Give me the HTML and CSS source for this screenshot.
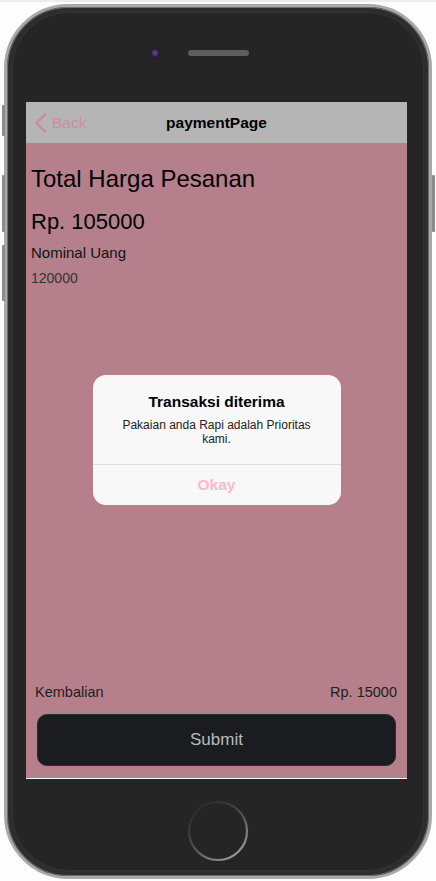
FILE: index.html
```html
<!DOCTYPE html>
<html lang="id">
<head>
<meta charset="utf-8">
<title>paymentPage</title>
<link rel="stylesheet" href="styles.css">
</head>
<body>
<div class="strip"></div>
<div class="phone">
  <span class="side side-mute"></span>
  <span class="side side-vol-up"></span>
  <span class="side side-vol-down"></span>
  <span class="side side-power"></span>
  <div class="bezel">
    <div class="top">
      <span class="camera"></span>
      <span class="speaker"></span>
    </div>
    <div class="screen">
      <header class="nav">
        <a class="back">
          <svg class="chevron" width="12" height="20" viewBox="0 0 12 20"><polyline points="10,1.5 1.5,10 10,18.5" fill="none" stroke="#d08c9d" stroke-width="2.6" stroke-linecap="round" stroke-linejoin="round"/></svg>
          <span>Back</span>
        </a>
        <h2 class="title">paymentPage</h2>
        <span></span>
      </header>
      <main class="content">
        <h1 class="total-label">Total Harga Pesanan</h1>
        <p class="total-amount">Rp. 105000</p>
        <p class="field-label">Nominal Uang</p>
        <p class="field-value">120000</p>
        <div class="spacer"></div>
        <div class="change-row"><span>Kembalian</span><span>Rp. 15000</span></div>
        <button class="submit">Submit</button>
      </main>
      <div class="overlay">
        <div class="alert">
          <h3 class="alert-title">Transaksi diterima</h3>
          <p class="alert-message">Pakaian anda Rapi adalah Prioritas kami.</p>
          <button class="alert-button">Okay</button>
        </div>
      </div>
    </div>
    <div class="bottom">
      <svg class="home" width="62" height="62" viewBox="0 0 62 62">
        <defs>
          <linearGradient id="hg" x1="0.15" y1="0" x2="0.85" y2="1">
            <stop offset="0" stop-color="#262626"/>
            <stop offset="0.45" stop-color="#4a4a4a"/>
            <stop offset="1" stop-color="#a2a2a2"/>
          </linearGradient>
        </defs>
        <circle cx="31" cy="31" r="29" fill="none" stroke="url(#hg)" stroke-width="2.2"/>
      </svg>
    </div>
  </div>
</div>
</body>
</html>
```
FILE: styles.css
```css
* { box-sizing: border-box; }
html, body { margin: 0; padding: 0; }
body {
  background: #fdfdfd;
  font-family: "Liberation Sans", Arial, sans-serif;
  width: 436px;
  height: 881px;
  overflow: hidden;
}
.strip { height: 2px; background: #ececec; }

.phone {
  position: relative;
  margin: 2px 0 0 4px;
  width: 428px;
  height: 875px;
  border: 3px solid #a9a9a9;
  border-radius: 64px;
  background: #2d2d2d;
  padding: 6px;
  box-shadow: inset 0 0 0 1px #6f6f6f;
}
.side {
  position: absolute;
  width: 3px;
  background: #8c8c8c;
  border-radius: 1px;
}
.side-mute { left: -5px; top: 98px; height: 31px; }
.side-vol-up { left: -5px; top: 168px; height: 57px; }
.side-vol-down { left: -5px; top: 238px; height: 56px; }
.side-power { right: -6px; top: 168px; height: 57px; }

.bezel {
  height: 100%;
  border-radius: 56px;
  background: #252525;
  box-shadow: 0 0 0 1px #333;
  display: flex;
  flex-direction: column;
}
.top {
  height: 89px;
  flex: none;
  display: flex;
  align-items: center;
  padding: 0 0 10px 136px;
  gap: 27px;
}
.camera {
  width: 12px;
  height: 12px;
  border-radius: 50%;
  background: radial-gradient(circle, #6a4a8e 0, #3f2a5a 3px, #1d1a22 5px, #222 6px);
}
.speaker {
  width: 61px;
  height: 6px;
  border-radius: 3px;
  background-color: #4a4a4a;
  background-image: radial-gradient(circle, #6a6a6a 0.6px, transparent 0.9px);
  background-size: 2px 2px;
}

.screen {
  position: relative;
  margin: 0 16px 0 13px;
  height: 677px;
  flex: none;
  display: flex;
  flex-direction: column;
  border-bottom: 1px solid #ffffff;
}
.nav {
  height: 41px;
  background: #b5b5b5;
  display: grid;
  grid-template-columns: 1fr auto 1fr;
  align-items: center;
  padding: 0 9px;
}
.back {
  display: flex;
  align-items: center;
  gap: 5px;
  color: #d08c9d;
  font-size: 15.5px;
  font-weight: normal;
}
.chevron { display: block; }
.title {
  margin: 0;
  font-size: 15.5px;
  font-weight: bold;
  color: #000;
}

.content {
  flex: 1;
  background: #b5808b;
  display: flex;
  flex-direction: column;
  padding: 0 5px 12px;
}
.content p, .content h1 { margin: 0; font-weight: normal; }
.total-label { font-size: 24px; line-height: 28px; margin-top: 22px !important; color: #000; }
.total-amount { font-size: 22px; line-height: 25px; margin-top: 16px !important; color: #000; }
.field-label { font-size: 15px; line-height: 17px; margin-top: 10px !important; color: #111; }
.field-value { font-size: 14px; line-height: 16px; margin-top: 9px !important; color: #333; }
.spacer { flex: 1; }
.change-row {
  display: flex;
  justify-content: space-between;
  margin: 0 5px 0 4px;
  font-size: 14.5px;
  line-height: 17px;
  color: #1e1e1e;
}
.submit {
  margin: 13px 6px 0;
  height: 52px;
  border: 1px solid #2c2c30;
  border-radius: 10px;
  background: #1b1c20;
  color: #b9b9b9;
  font-family: "Liberation Sans", Arial, sans-serif;
  font-size: 17px;
}

.overlay {
  position: absolute;
  inset: 0;
  display: flex;
  align-items: center;
  justify-content: center;
}
.alert {
  width: 248px;
  border-radius: 13px;
  background: #f8f8f8;
  text-align: center;
  overflow: hidden;
}
.alert-title {
  margin: 0;
  padding-top: 18px;
  font-size: 15.5px;
  line-height: 18px;
  font-weight: bold;
  color: #000;
}
.alert-message {
  margin: 8px 0 0;
  padding: 0 16px 18px;
  font-size: 12px;
  line-height: 13.5px;
  color: #222;
}
.alert-button {
  display: block;
  width: 100%;
  height: 41px;
  border: 0;
  border-top: 1px solid #dcdcdc;
  background: transparent;
  color: #ffb7c9;
  font-family: "Liberation Sans", Arial, sans-serif;
  font-size: 15.5px;
  font-weight: bold;
}

.bottom {
  flex: 1;
  display: flex;
  justify-content: center;
  padding-top: 21px;
}
.home { display: block; }
```
